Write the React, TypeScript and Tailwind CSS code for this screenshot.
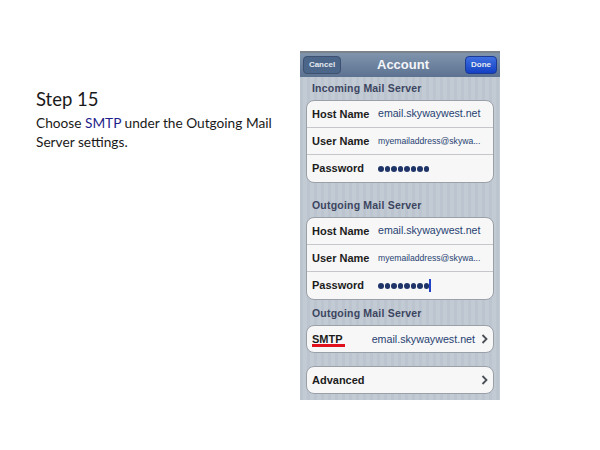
import React from "react";

const stripes =
  "bg-[repeating-linear-gradient(90deg,#bbc4cf_0px,#bbc4cf_3px,#c2cad4_3px,#c2cad4_7px)]";

function Row({
  label,
  children,
  last,
}: {
  label: string;
  children: React.ReactNode;
  last?: boolean;
}) {
  return (
    <div
      className={`h-[27px] flex items-center pl-[5px] ${
        last ? "" : "border-b border-[#c4c6c9]"
      }`}
    >
      <span className="w-[66px] shrink-0 text-[11px] font-bold text-[#1c1c1c]">
        {label}
      </span>
      {children}
    </div>
  );
}

function Dots() {
  return (
    <div className="flex gap-[1px] mt-[1px]">
      {[0, 1, 2, 3, 4, 5, 6, 7].map((i) => (
        <span key={i} className="w-[5.5px] h-[5.5px] rounded-full bg-[#1f3468]" />
      ))}
    </div>
  );
}

function Chevron() {
  return (
    <svg width="7" height="10" viewBox="0 0 7 10" className="shrink-0">
      <path d="M1.5 1 L5.5 5 L1.5 9" fill="none" stroke="#4a4f56" strokeWidth="1.8" />
    </svg>
  );
}

function ServerCard({ cursor }: { cursor?: boolean }) {
  return (
    <div className="mx-[6px] rounded-[8px] bg-[#f7f7f7] border border-[#9aa0a8] overflow-hidden">
      <Row label="Host Name">
        <span className="text-[10.6px] text-[#263f72]">email.skywaywest.net</span>
      </Row>
      <Row label="User Name">
        <span className="text-[8.6px] text-[#263f72]">myemailaddress@skywa...</span>
      </Row>
      <Row label="Password" last>
        <Dots />
        {cursor && <span className="w-[2px] h-[13px] bg-[#2340c8]" />}
      </Row>
    </div>
  );
}

function SectionLabel({ children }: { children: React.ReactNode }) {
  return (
    <div className="pl-[12px] text-[10.5px] font-bold tracking-[0.2px] text-[#3c4560] leading-[13px]">
      {children}
    </div>
  );
}

export default function App() {
  return (
    <div className="w-[600px] h-[450px] bg-white flex font-['Liberation_Sans',Arial,sans-serif]">
      <div className="w-[300px] pl-[36px] pt-[88px] font-['Lato',sans-serif] text-[#1a1a1a]">
        <div className="text-[18.5px] leading-[22px]">Step 15</div>
        <p className="mt-[3px] text-[13.7px] leading-[19px] w-[245px]">
          Choose <span className="text-[#1f1f8c]">SMTP</span> under the Outgoing Mail Server settings.
        </p>
      </div>

      <div className={`w-[200px] h-[349px] mt-[51px] ${stripes} flex flex-col`}>
        <div className="h-[26px] shrink-0 border-t-2 border-[#7d838a] bg-gradient-to-b from-[#8094ac] to-[#5c7291] flex items-center justify-between px-[3px]">
          <span className="w-[38px] h-[18px] rounded-[4px] border border-[#3e5170] bg-[#4c6689] text-[#e4e9f0] text-[8px] font-bold flex items-center justify-center">
            Cancel
          </span>
          <span className="text-[#f4f6f9] text-[13px] font-bold">Account</span>
          <span className="w-[32px] h-[18px] rounded-[4px] border border-[#1a3a94] bg-gradient-to-b from-[#3f6fe0] to-[#1440c4] text-[#e4e9f0] text-[8px] font-bold flex items-center justify-center">
            Done
          </span>
        </div>

        <div className="mt-[5px]">
          <SectionLabel>Incoming Mail Server</SectionLabel>
        </div>
        <div className="mt-[5px]">
          <ServerCard />
        </div>

        <div className="mt-[16px]">
          <SectionLabel>Outgoing Mail Server</SectionLabel>
        </div>
        <div className="mt-[5px]">
          <ServerCard cursor />
        </div>

        <div className="mt-[7px]">
          <SectionLabel>Outgoing Mail Server</SectionLabel>
        </div>
        <div className="relative mt-[5px] mx-[6px] h-[28px] rounded-[8px] bg-[#f7f7f7] border border-[#9aa0a8] flex items-center justify-between pl-[5px] pr-[5px]">
          <span className="text-[11px] font-bold text-[#1c1c1c]">SMTP</span>
          <span className="ml-auto mr-[6px] text-[10.7px] text-[#263f72]">email.skywaywest.net</span>
          <Chevron />
          <span className="absolute left-[5px] top-[18px] w-[33px] h-[3px] bg-[#e0101c]" />
        </div>

        <div className="mt-[13px] mx-[6px] h-[28px] rounded-[8px] bg-[#f7f7f7] border border-[#9aa0a8] flex items-center justify-between pl-[5px] pr-[5px]">
          <span className="text-[11px] font-bold text-[#1c1c1c]">Advanced</span>
          <Chevron />
        </div>
      </div>
    </div>
  );
}
